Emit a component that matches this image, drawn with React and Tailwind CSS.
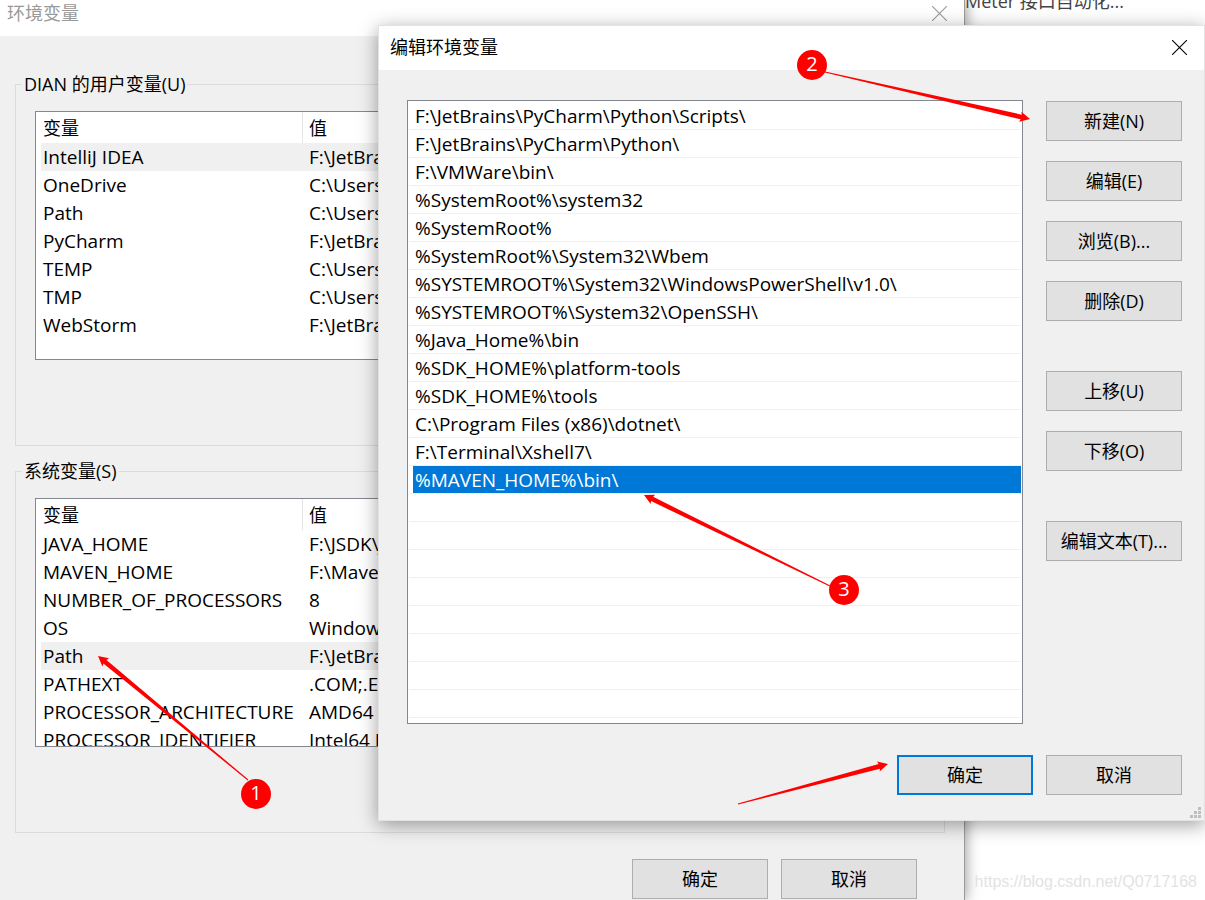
import { useState } from 'react';
import clsx from 'clsx';

const USER_VARS = [
    ['IntelliJ IDEA', 'F:\\JetBra'],
    ['OneDrive', 'C:\\Users\\'],
    ['Path', 'C:\\Users\\'],
    ['PyCharm', 'F:\\JetBra'],
    ['TEMP', 'C:\\Users\\'],
    ['TMP', 'C:\\Users\\'],
    ['WebStorm', 'F:\\JetBra'],
];

const SYSTEM_VARS = [
    ['JAVA_HOME', 'F:\\JSDK\\j'],
    ['MAVEN_HOME', 'F:\\Maven'],
    ['NUMBER_OF_PROCESSORS', '8'],
    ['OS', 'Window'],
    ['Path', 'F:\\JetBra'],
    ['PATHEXT', '.COM;.EX'],
    ['PROCESSOR_ARCHITECTURE', 'AMD64'],
    ['PROCESSOR_IDENTIFIER', 'Intel64 F'],
];

const PATHS = [
    'F:\\JetBrains\\PyCharm\\Python\\Scripts\\',
    'F:\\JetBrains\\PyCharm\\Python\\',
    'F:\\VMWare\\bin\\',
    '%SystemRoot%\\system32',
    '%SystemRoot%',
    '%SystemRoot%\\System32\\Wbem',
    '%SYSTEMROOT%\\System32\\WindowsPowerShell\\v1.0\\',
    '%SYSTEMROOT%\\System32\\OpenSSH\\',
    '%Java_Home%\\bin',
    '%SDK_HOME%\\platform-tools',
    '%SDK_HOME%\\tools',
    'C:\\Program Files (x86)\\dotnet\\',
    'F:\\Terminal\\Xshell7\\',
    '%MAVEN_HOME%\\bin\\',
];

const TOTAL_ROWS = 22;

const ACTIONS = [
    ['新建(N)', '编辑(E)', '浏览(B)...', '删除(D)'],
    ['上移(U)', '下移(O)'],
    ['编辑文本(T)...'],
];

const WinButton = ({ children, primary }) => (
    <button
        type="button"
        className={clsx(
            'flex h-10 w-[136px] shrink-0 items-center justify-center bg-[#e1e1e1] whitespace-nowrap',
            primary ? 'border-2 border-[#0078d7]' : 'border border-[#adadad]'
        )}
    >
        {children}
    </button>
);

const CloseButton = ({ className }) => (
    <button type="button" aria-label="关闭" className={className}>
        <svg width="15" height="15" viewBox="0 0 15 15" fill="none" stroke="currentColor" strokeWidth="1.1">
            <path d="M0 0 15 15M15 0 0 15" />
        </svg>
    </button>
);

const VarGroup = ({ title, vars, initial }) => {
    const [selected, setSelected] = useState(initial);

    return (
        <fieldset className="min-w-0 border border-[#dcdcdc] px-[19px] pb-[85px]">
            <legend className="-ml-[13px] px-[2px]">{title}</legend>
            <div className="mt-[13px] h-[249px] overflow-hidden border border-[#828790] bg-white pl-[5px]">
                <table className="w-full table-fixed border-separate border-spacing-0 text-left whitespace-nowrap">
                    <thead>
                        <tr className="h-[31px]">
                            <th className="w-[262px] border-r border-[#e5e5e5] p-0 pl-[2px] font-normal">变量</th>
                            <th className="p-0 pl-[6px] font-normal">值</th>
                        </tr>
                    </thead>
                    <tbody className="text-[19px] leading-7">
                        {vars.map(([name, value], i) => (
                            <tr
                                key={name}
                                onClick={() => setSelected(i)}
                                className={clsx('h-7', selected === i && 'bg-[#f0f0f0]')}
                            >
                                <td className="p-0 pl-[2px]">{name}</td>
                                <td className="overflow-hidden p-0 pl-[6px]">{value}</td>
                            </tr>
                        ))}
                    </tbody>
                </table>
            </div>
        </fieldset>
    );
};

const VariablesWindow = () => (
    <section className="box-content min-h-screen w-4/5 border-r border-[#9a9a9a] bg-[#f0f0f0] shadow-[2px_0_12px_rgba(0,0,0,0.35)]">
        <header className="flex h-9 items-start justify-between bg-white pr-[17px] pl-[7px] text-[#999999]">
            <h1 className="leading-[26px]">环境变量</h1>
            <CloseButton className="mt-[6px]" />
        </header>
        <div className="flex flex-col gap-[11px] pt-[34px] pr-[19px] pl-[15px]">
            <VarGroup title="DIAN 的用户变量(U)" vars={USER_VARS} initial={0} />
            <VarGroup title="系统变量(S)" vars={SYSTEM_VARS} initial={4} />
        </div>
        <footer className="flex justify-end gap-[13px] pt-[26px] pr-[47px]">
            <WinButton>确定</WinButton>
            <WinButton>取消</WinButton>
        </footer>
    </section>
);

const PathList = () => {
    const [selected, setSelected] = useState(13);

    return (
        <ul className="min-w-0 flex-1 border border-[#828790] bg-white px-px pt-px pb-[5px] text-[19px]">
            {Array.from({ length: TOTAL_ROWS }, (_, i) => (
                <li key={i} onClick={() => setSelected(i)} className="h-7 border-b border-[#f0f0f0] pl-1">
                    <div
                        className={clsx(
                            'h-[27px] overflow-hidden pl-[2px] leading-7 whitespace-nowrap',
                            selected === i && 'bg-[#0078d7] text-white'
                        )}
                    >
                        {PATHS[i]}
                    </div>
                </li>
            ))}
        </ul>
    );
};

const SizeGrip = () => (
    <svg className="absolute right-[3px] bottom-[2px]" width="11" height="11" fill="#bfbfbf">
        <path d="M8 0h3v3h-3zM4 4h3v3h-3zM8 4h3v3h-3zM0 8h3v3h-3zM4 8h3v3h-3zM8 8h3v3h-3z" />
    </svg>
);

const EditDialog = () => (
    <section
        role="dialog"
        aria-label="编辑环境变量"
        className="absolute top-[25px] right-0 left-[378px] border border-[#e3e3e3] bg-[#f0f0f0] shadow-[0_4px_18px_rgba(0,0,0,0.38)]"
    >
        <header className="flex h-11 items-start justify-between bg-white pr-[17px] pl-[11px]">
            <h2 className="leading-[42px]">编辑环境变量</h2>
            <CloseButton className="mt-[14px]" />
        </header>
        <div className="flex gap-[23px] pt-[30px] pr-[22px] pl-7">
            <PathList />
            <div className="flex flex-col gap-[50px] pt-px">
                {ACTIONS.map(group => (
                    <div key={group[0]} className="flex flex-col gap-5">
                        {group.map(label => (
                            <WinButton key={label}>{label}</WinButton>
                        ))}
                    </div>
                ))}
            </div>
        </div>
        <footer className="flex justify-end gap-[13px] pt-[31px] pr-[22px] pb-[25px]">
            <WinButton primary>确定</WinButton>
            <WinButton>取消</WinButton>
        </footer>
        <SizeGrip />
    </section>
);

// Tapered arrow: thin at the tail, thicker towards the head
const Arrow = ({ from, to }) => {
    const [x1, y1] = from;
    const [x2, y2] = to;
    const len = Math.hypot(x2 - x1, y2 - y1);
    const ux = (x2 - x1) / len;
    const uy = (y2 - y1) / len;
    const at = (back, side) => `${x2 - ux * back - uy * side},${y2 - uy * back + ux * side}`;
    const points = [
        at(len, 0.5), at(9, 2.4), at(10, 5.2), at(0, 0), at(10, -5.2), at(9, -2.4), at(len, -0.5),
    ];
    return <polygon points={points.join(' ')} fill="#ff0000" />;
};

const Badge = ({ children, className }) => (
    <span
        className={clsx(
            'absolute flex size-[30px] items-center justify-center rounded-full bg-[#ff0000] pb-[2px] text-[20px] text-white',
            className
        )}
    >
        {children}
    </span>
);

const Annotations = () => (
    <div className="pointer-events-none absolute inset-0">
        <svg className="absolute inset-0 size-full">
            <Arrow from={[248, 780]} to={[98, 656]} />
            <Arrow from={[825, 72]} to={[1030, 119]} />
            <Arrow from={[830, 586]} to={[644, 495]} />
            <Arrow from={[738, 804]} to={[888, 764]} />
        </svg>
        <Badge className="top-[779px] left-[241px]">1</Badge>
        <Badge className="top-[50px] left-[797px]">2</Badge>
        <Badge className="top-[575px] left-[829px]">3</Badge>
    </div>
);

const App = () => (
    <div className="relative h-screen w-full overflow-hidden bg-white font-['Open_Sans','Noto_Sans_CJK_SC',sans-serif] text-[18px] leading-7 text-black">
        <p className="absolute -top-[13px] left-[965px] whitespace-nowrap text-[#444444]">Meter 接口自动化...</p>
        <VariablesWindow />
        <EditDialog />
        <Annotations />
        <p className="absolute right-2 bottom-1 font-['Liberation_Sans',sans-serif] text-[16px] text-[#e3e3e3]">
            https://blog.csdn.net/Q0717168
        </p>
    </div>
);

export default App;
